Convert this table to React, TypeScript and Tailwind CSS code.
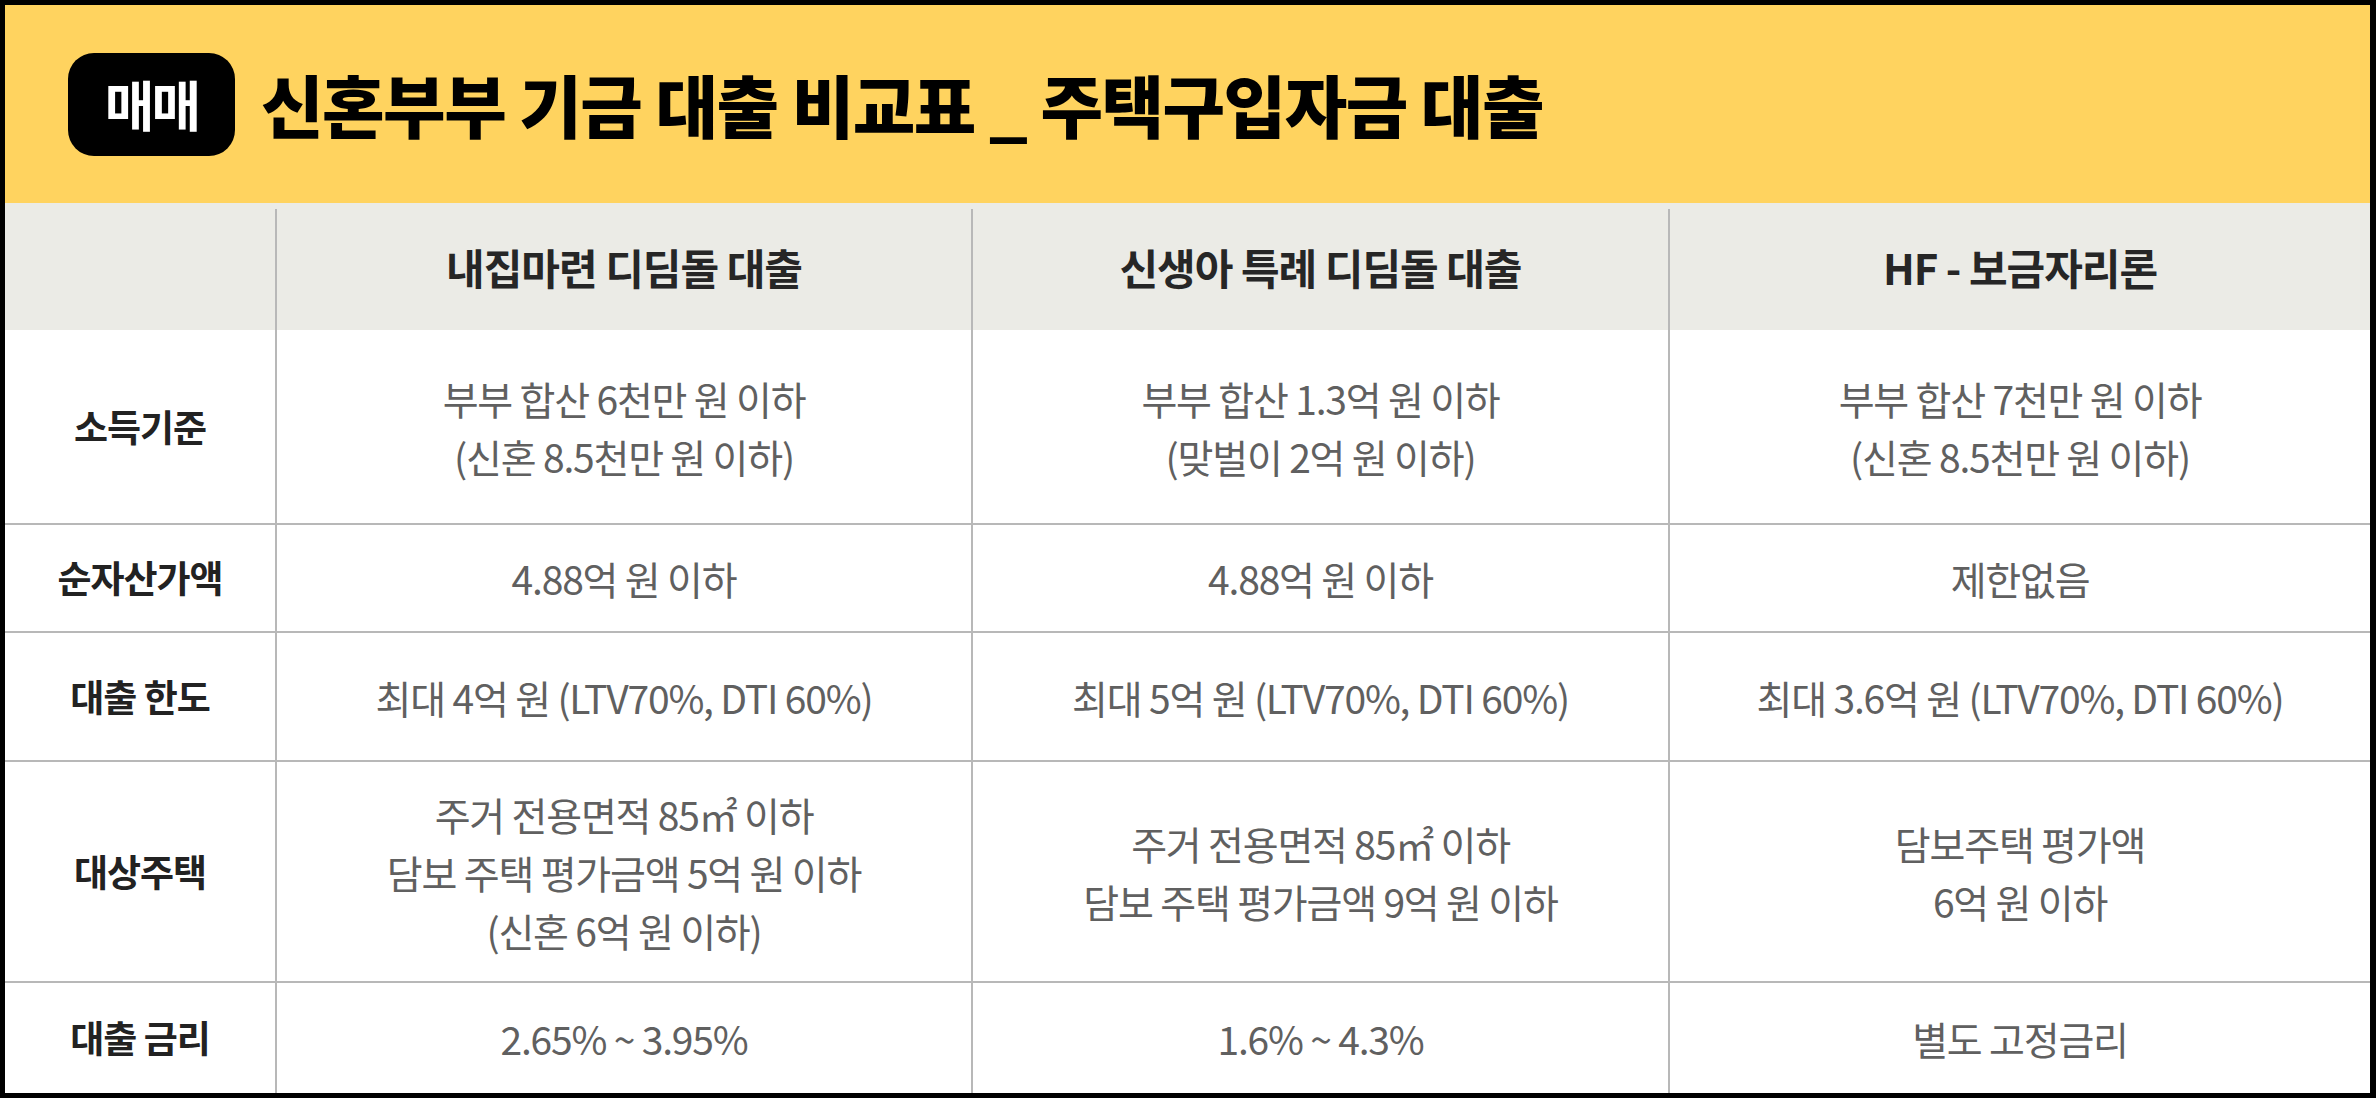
const font = { fontFamily: '"Noto Sans CJK KR", "Noto Sans", sans-serif' };

type Row = {
  label: string;
  height: string;
  cells: string[][];
};

const columns = ["내집마련 디딤돌 대출", "신생아 특례 디딤돌 대출", "HF - 보금자리론"];

const rows: Row[] = [
  {
    label: "소득기준",
    height: "h-[193px]",
    cells: [
      ["부부 합산 6천만 원 이하", "(신혼 8.5천만 원 이하)"],
      ["부부 합산 1.3억 원 이하", "(맞벌이 2억 원 이하)"],
      ["부부 합산 7천만 원 이하", "(신혼 8.5천만 원 이하)"],
    ],
  },
  {
    label: "순자산가액",
    height: "h-[108px]",
    cells: [["4.88억 원 이하"], ["4.88억 원 이하"], ["제한없음"]],
  },
  {
    label: "대출 한도",
    height: "h-[129px]",
    cells: [
      ["최대 4억 원 (LTV70%, DTI 60%)"],
      ["최대 5억 원 (LTV70%, DTI 60%)"],
      ["최대 3.6억 원 (LTV70%, DTI 60%)"],
    ],
  },
  {
    label: "대상주택",
    height: "h-[221px]",
    cells: [
      ["주거 전용면적 85㎡ 이하", "담보 주택 평가금액 5억 원 이하", "(신혼 6억 원 이하)"],
      ["주거 전용면적 85㎡ 이하", "담보 주택 평가금액 9억 원 이하"],
      ["담보주택 평가액", "6억 원 이하"],
    ],
  },
  {
    label: "대출 금리",
    height: "h-[112px]",
    cells: [["2.65% ~ 3.95%"], ["1.6% ~ 4.3%"], ["별도 고정금리"]],
  },
];

export default function App() {
  return (
    <div
      className="flex h-[1098px] w-[2376px] flex-col bg-black pt-[5px] pr-[6px] pb-[5px] pl-[5px]"
      style={font}
    >
      <header className="flex h-[198px] items-center gap-[26px] bg-[#ffd35f] pl-[63px]">
        <div className="flex h-[103px] w-[167px] items-center justify-center rounded-[26px] bg-black">
          <span className="text-[54px] font-bold leading-none tracking-[-3px] text-white">
            매매
          </span>
        </div>
        <h1 className="text-[68px] font-black leading-none tracking-[-1.5px] text-black">
          신혼부부 기금 대출 비교표 _ 주택구입자금 대출
        </h1>
      </header>

      <div className="flex flex-1 flex-col bg-white">
        <div className="grid h-[127px] grid-cols-[270px_696px_697px_1fr] bg-[#ebebe6] pt-[6px]">
          <div />
          {columns.map((c) => (
            <div
              key={c}
              className="flex items-center justify-center border-l-2 border-[#b8b8b8] pb-[6px] text-[42px] font-bold tracking-[-1px] text-[#262626]"
            >
              {c}
            </div>
          ))}
        </div>

        {rows.map((row, i) => (
          <div
            key={row.label}
            className={`grid grid-cols-[270px_696px_697px_1fr] ${row.height} ${
              i > 0 ? "border-t-2 border-[#b8b8b8]" : ""
            }`}
          >
            <div className="flex items-center justify-center text-[37px] font-bold tracking-[-1px] text-[#222]">
              {row.label}
            </div>
            {row.cells.map((lines, j) => (
              <div
                key={j}
                className="flex flex-col items-center justify-center border-l-2 border-[#b8b8b8] text-[39px] leading-[58px] tracking-[-1.2px] text-[#606060]"
              >
                {lines.map((l) => (
                  <span key={l}>{l}</span>
                ))}
              </div>
            ))}
          </div>
        ))}
      </div>
    </div>
  );
}
